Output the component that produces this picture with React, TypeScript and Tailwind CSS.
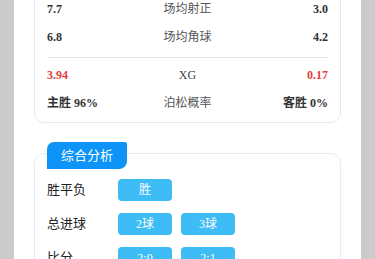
import React from 'react';

interface StatRow {
  home: string;
  label: string;
  away: string;
}

const stats: StatRow[] = [
  { home: '1.9', label: '场均进球', away: '0.8' },
  { home: '7.7', label: '场均射正', away: '3.0' },
  { home: '6.8', label: '场均角球', away: '4.2' },
];

const picks: { label: string; items: string[] }[] = [
  { label: '胜平负', items: ['胜'] },
  { label: '总进球', items: ['2球', '3球'] },
  { label: '比分', items: ['2:0', '2:1'] },
];

const font = { fontFamily: '"Liberation Serif", "Noto Sans CJK SC", serif' };

const App: React.FC = () => {
  return (
    <div className="h-[259px] overflow-hidden bg-[#cbcbcb]" style={font}>
      {/* page scrolled down: panel starts above the viewport */}
      <div className="mx-[14px] -mt-[46px] min-h-[360px] bg-white px-[20px]">
        <div className="rounded-[10px] border border-[#e6ebf1] px-[12px] pb-[5px] pt-[12px]">
          {stats.map((s) => (
            <div key={s.label} className="flex h-[28px] items-center justify-between text-[12px] leading-[14px]">
              <span className="w-[60px] font-bold text-[#333]">{s.home}</span>
              <span className="text-[#555]">{s.label}</span>
              <span className="w-[60px] text-right font-bold text-[#333]">{s.away}</span>
            </div>
          ))}
          <div className="mt-[6px] h-px bg-[#e3e7ec]" />
          <div className="mt-[3px] flex h-[28px] items-center justify-between text-[12px] leading-[14px]">
            <span className="w-[60px] font-bold text-[#e2403f]">3.94</span>
            <span className="text-[#444]">XG</span>
            <span className="w-[60px] text-right font-bold text-[#e2403f]">0.17</span>
          </div>
          <div className="flex h-[28px] items-center justify-between text-[12px] leading-[14px]">
            <span className="w-[80px] font-bold text-[#333]">主胜 96%</span>
            <span className="text-[#555]">泊松概率</span>
            <span className="w-[80px] text-right font-bold text-[#333]">客胜 0%</span>
          </div>
        </div>

        {/* 综合分析 */}
        <div className="relative mt-[30px] rounded-[10px] border border-[#e4edf6] px-[12px] pb-[12px] pt-[25px]">
          <div className="absolute -top-[12px] left-[12px] flex h-[27px] w-[80px] items-center justify-center rounded-tl-[7px] rounded-tr-[2px] rounded-br-[8px] bg-[#0d94f6] text-[13px] text-white">
            综合分析
          </div>
          <div className="flex flex-col gap-[12px]">
            {picks.map((p) => (
              <div key={p.label} className="flex h-[22px] items-center">
                <span className="w-[71px] text-[13px] text-[#222]">{p.label}</span>
                <div className="flex gap-[9px]">
                  {p.items.map((it) => (
                    <span
                      key={it}
                      className="flex h-[22px] w-[54px] items-center justify-center rounded-[4px] bg-[#3dbcf6] text-[12px] text-white"
                    >
                      {it}
                    </span>
                  ))}
                </div>
              </div>
            ))}
          </div>
        </div>
      </div>
    </div>
  );
};

export default App;
